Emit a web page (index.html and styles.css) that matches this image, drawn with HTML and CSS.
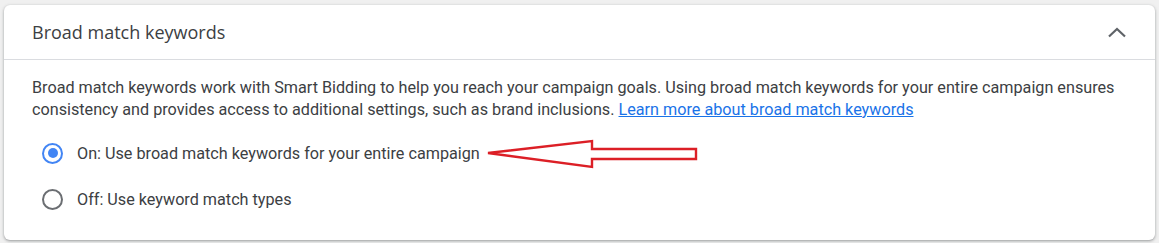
FILE: index.html
```html
<!DOCTYPE html>
<html>
<head>
<meta charset="utf-8">
<link rel="stylesheet" href="styles.css">
</head>
<body>
<div class="card">
  <div class="header">
    <div class="title">Broad match keywords</div>
    <svg class="chevron" width="24" height="24" viewBox="0 0 24 24"><path d="M4 15.5 L12 8 L20 15.5" fill="none" stroke="#5f6368" stroke-width="2.2"/></svg>
  </div>
  <div class="content">
    <p class="desc">Broad match keywords work with Smart Bidding to help you reach your campaign goals. Using broad match keywords for your entire campaign ensures consistency and provides access to additional settings, such as brand inclusions. <a href="#">Learn more about broad match keywords</a></p>
    <div class="options">
      <label class="option">
        <span class="radio checked"><span class="dot"></span></span>
        <span class="label">On: Use broad match keywords for your entire campaign</span>
      </label>
      <label class="option">
        <span class="radio"></span>
        <span class="label">Off: Use keyword match types</span>
      </label>
    </div>
  </div>
  <svg class="arrow" width="220" height="40" viewBox="0 0 220 40"><polygon points="4,17 108,5 108,13 212,13 212,23 108,23 108,31" fill="none" stroke="#dc1f26" stroke-width="2.4" stroke-linejoin="miter"/></svg>
</div>
</body>
</html>
```
FILE: styles.css
```css
html, body { margin: 0; padding: 0; }
body {
  background: #f0f0f0;
  width: 1159px;
  height: 243px;
  padding: 5px 4px 0 4px;
  box-sizing: border-box;
  font-family: Roboto, "Liberation Sans", sans-serif;
}
.card {
  position: relative;
  background: #fff;
  height: 235px;
  border-radius: 6px;
  box-shadow: 0 1px 2px rgba(60,64,67,0.3), 0 1px 3px 1px rgba(60,64,67,0.15);
}
.header {
  height: 54px;
  border-bottom: 1px solid #dadce0;
  display: flex;
  align-items: center;
  justify-content: space-between;
  padding: 0 26px 0 28px;
}
.title {
  font-family: "Open Sans", Roboto, sans-serif;
  font-size: 18px;
  color: #3c4043;
  margin-top: -1px;
}
.chevron { margin-top: 1px; }
.content {
  padding: 17px 28px 0 28px;
}
.desc {
  margin: 0;
  font-size: 16.2px;
  line-height: 22px;
  color: #3c4043;
}
.desc a { color: #1a73e8; text-decoration: underline; }
.options {
  margin-top: 21px;
  display: flex;
  flex-direction: column;
  gap: 24px;
}
.option {
  display: flex;
  align-items: center;
  height: 22px;
  padding-left: 10px;
}
.radio {
  width: 21px;
  height: 21px;
  box-sizing: border-box;
  border: 2px solid #6b6e72;
  border-radius: 50%;
  display: flex;
  align-items: center;
  justify-content: center;
}
.radio.checked { border: 2.5px solid #4285f4; }
.dot {
  width: 10px;
  height: 10px;
  border-radius: 50%;
  background: #4285f4;
}
.label {
  margin-left: 14px;
  font-size: 16.2px;
  color: #3c4043;
}
.arrow {
  position: absolute;
  left: 480px;
  top: 131px;
}
```
